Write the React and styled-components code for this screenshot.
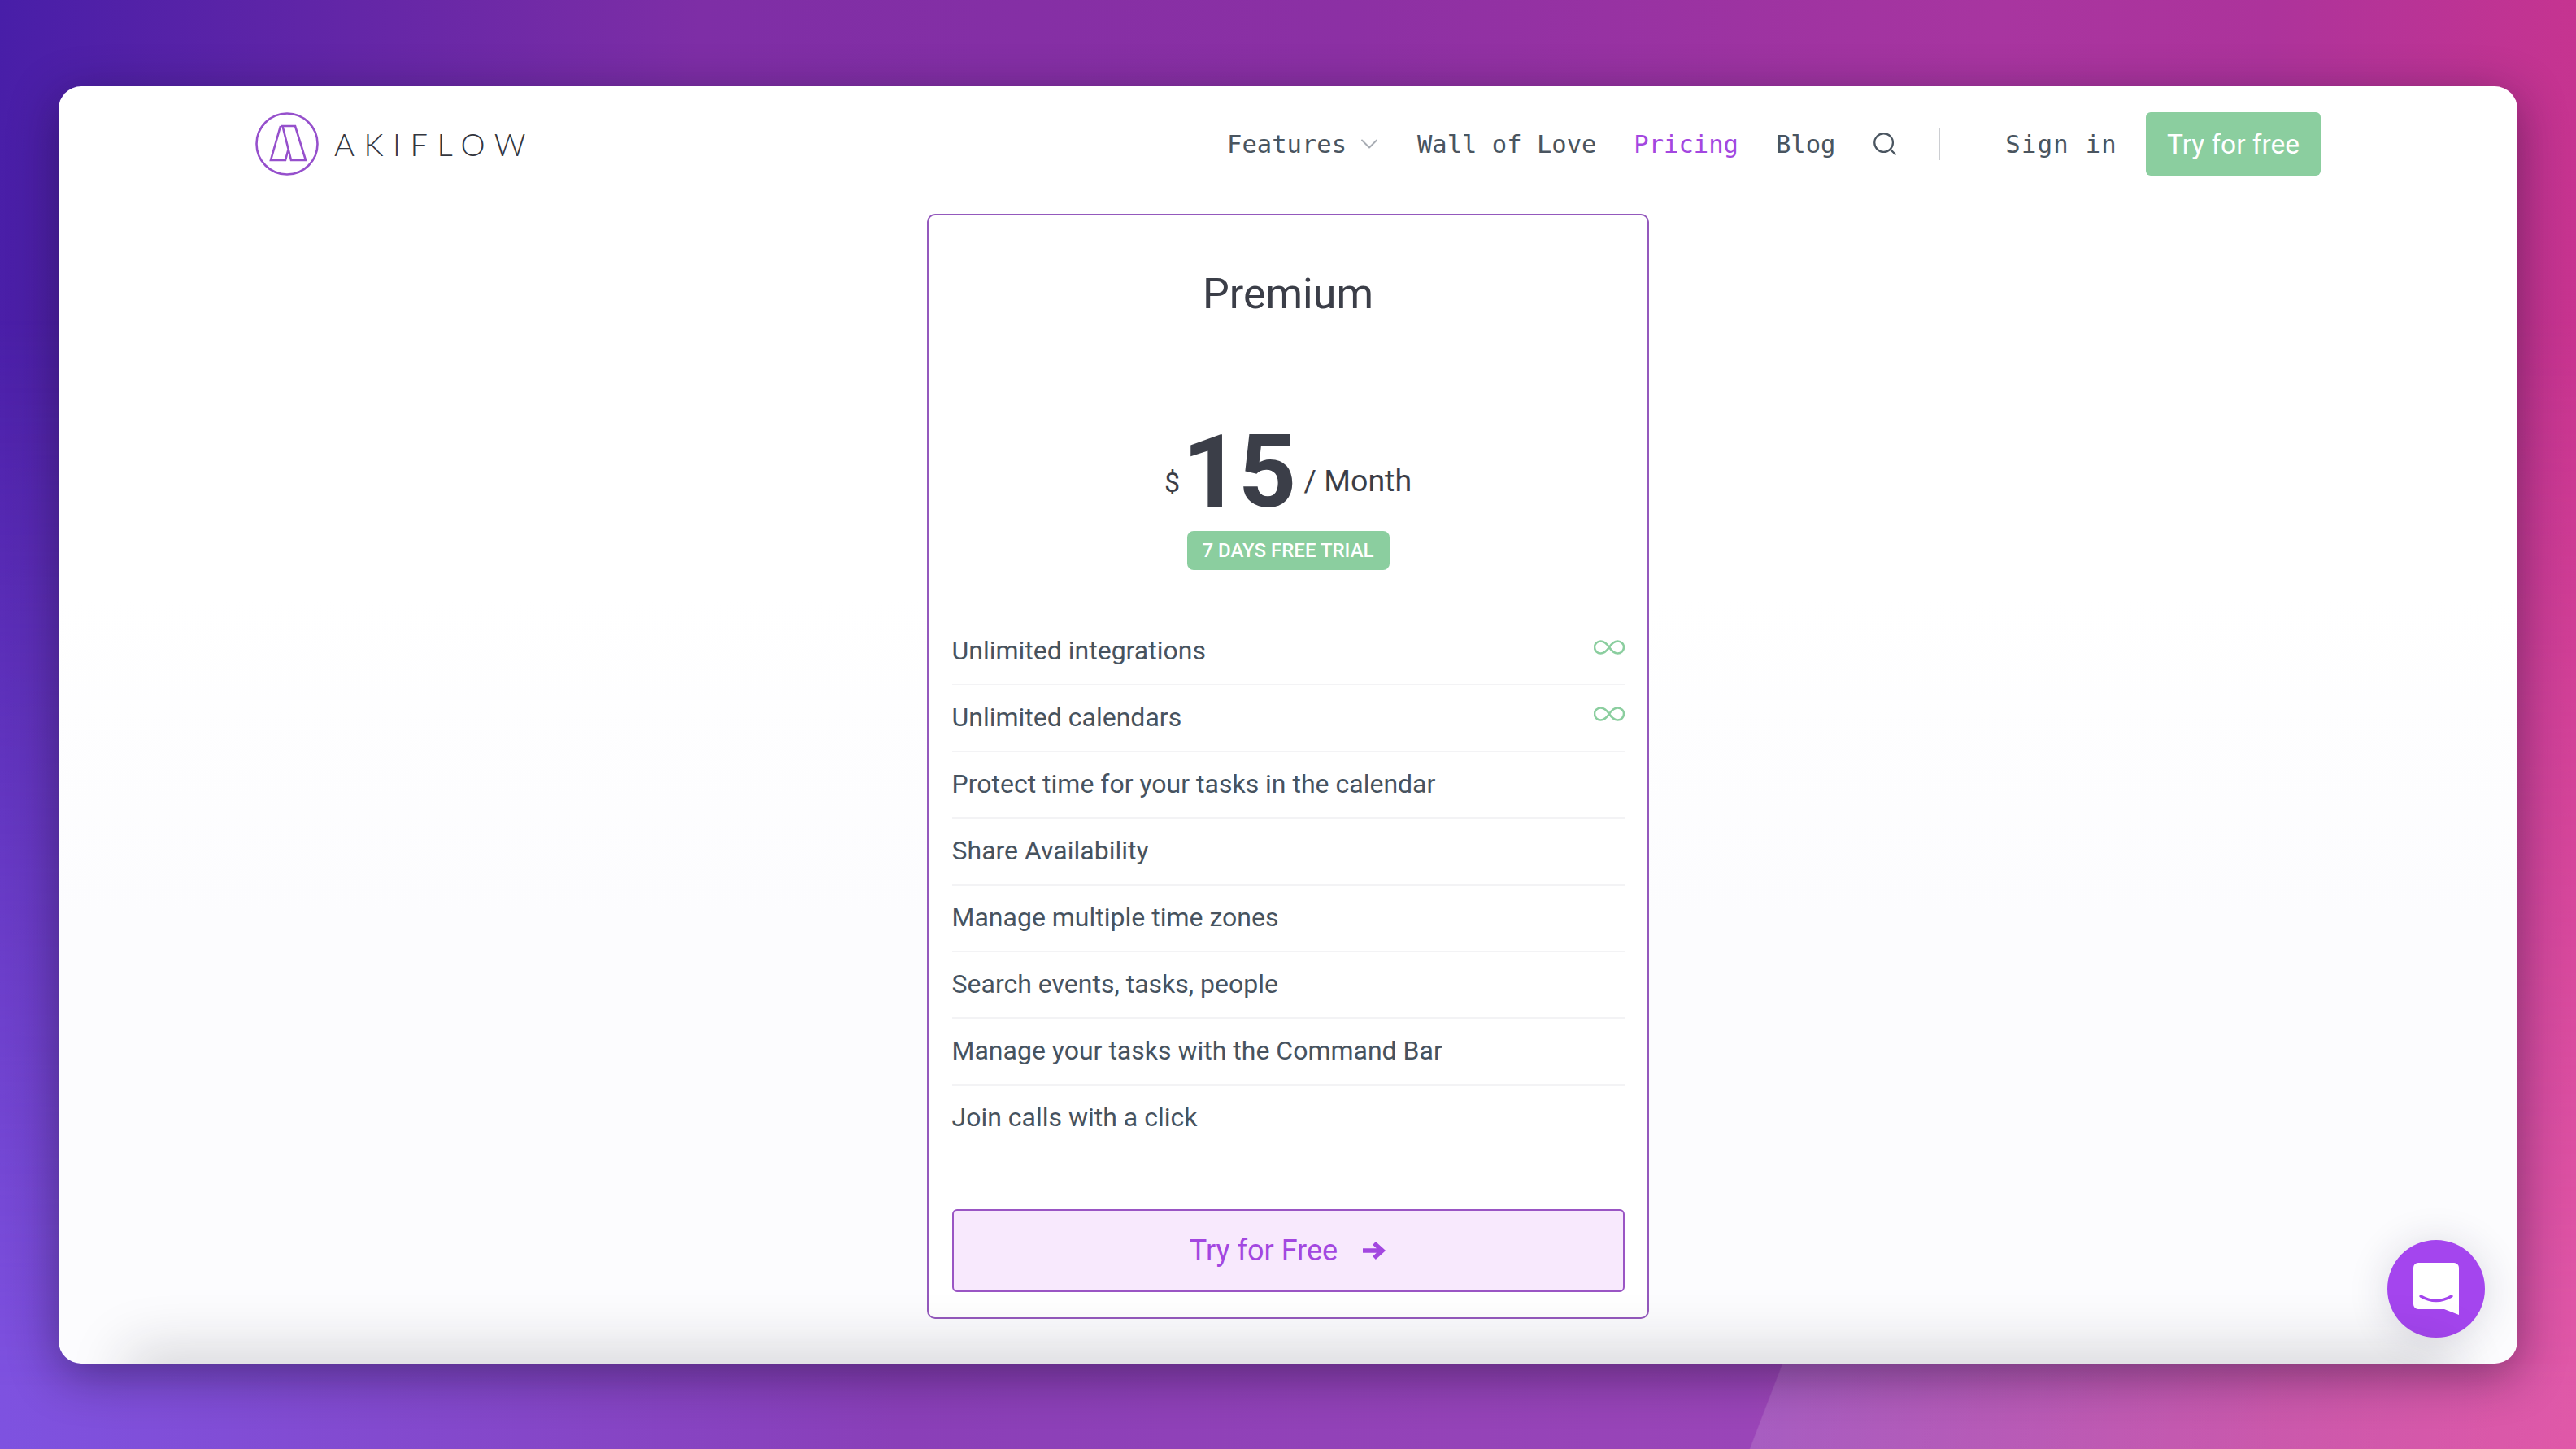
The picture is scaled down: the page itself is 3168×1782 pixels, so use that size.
import React from "react";
import styled, { createGlobalStyle } from "styled-components";
import { Search, ChevronDown } from "lucide-react";

const GlobalStyle = createGlobalStyle`
  html, body {
    margin: 0;
    padding: 0;
    width: 3168px;
    height: 1782px;
    overflow: hidden;
  }
  * {
    box-sizing: border-box;
  }
`;

const Backdrop = styled.div`
  position: relative;
  width: 3168px;
  height: 1782px;
  padding: 106px 72px 105px;
  font-family: Roboto, sans-serif;
  background: linear-gradient(95deg, #481ea8 0%, #7e2ea6 26%, #8c30a4 50%, #a835a0 74%, #ad339b 84%, #d0348c 100%);

  &::before {
    content: "";
    position: absolute;
    inset: 0;
    background:
      linear-gradient(111deg, transparent 68.3%, rgba(255, 255, 255, 0.13) 68.35%, rgba(255, 255, 255, 0) 100%) 0 1678px / 100% 104px no-repeat,
      linear-gradient(90deg, #7e52e0 0%, #8a3fb8 35%, #9a45b8 68%, #c850a8 88%, #e058a8 100%);
    mask-image: linear-gradient(180deg, transparent 22%, #000 96%);
  }
`;

const Window = styled.main`
  position: relative;
  width: 3024px;
  height: 1571px;
  border-radius: 28px;
  background: linear-gradient(180deg, #ffffff 0%, #ffffff 40%, #fcfcfe 65%, #fcfcfe 100%);
  box-shadow: 0 14px 60px rgba(20, 10, 40, 0.45);
  overflow: hidden;

  &::after {
    content: "";
    position: absolute;
    left: 100px;
    right: 100px;
    bottom: -40px;
    height: 40px;
    box-shadow: 0 0 70px 16px rgba(30, 30, 40, 0.18);
  }
`;

const Nav = styled.header`
  display: flex;
  align-items: center;
  justify-content: space-between;
  height: 78px;
  margin: 32px 242px 0;
`;

const Logo = styled.div`
  display: flex;
  align-items: center;
  gap: 19px;
`;

const LogoWord = styled.span`
  font-family: Lato, sans-serif;
  font-weight: 300;
  font-size: 38px;
  letter-spacing: 11.5px;
  color: #33363e;
`;

const Links = styled.nav`
  display: flex;
  align-items: center;
`;

const NavLink = styled.a`
  display: flex;
  align-items: center;
  margin-right: ${(p) => p.$gap || 46}px;
  font-family: "DejaVu Sans Mono", monospace;
  font-size: 30.5px;
  letter-spacing: ${(p) => p.$spacing || 0}px;
  color: ${(p) => (p.$active ? "#a347e0" : "#4a5560")};
`;

const Caret = styled(ChevronDown)`
  margin-left: 10px;
  color: #a7acb3;
`;

const SearchIcon = styled(Search)`
  color: #4a5560;
  margin-right: 49px;
`;

const Divider = styled.span`
  width: 2px;
  height: 40px;
  margin-right: 80px;
  background: #ccced2;
`;

const CtaButton = styled.a`
  display: flex;
  align-items: center;
  justify-content: center;
  width: 215px;
  height: 78px;
  border-radius: 6px;
  background: #8bce9f;
  color: #ffffff;
  font-size: 33.5px;
`;

const Card = styled.section`
  width: 888px;
  height: 1359px;
  margin: 47px auto 0;
  padding: 0 28.5px;
  border: 2.5px solid #9459bd;
  border-radius: 10px;
  background: #ffffff;
`;

const PlanName = styled.h2`
  margin: 0;
  padding-top: 61.5px;
  height: 152.5px;
  font-size: 52px;
  font-weight: 400;
  line-height: 70px;
  text-align: center;
  color: #3b3e48;
`;

const PriceRow = styled.div`
  display: flex;
  align-items: flex-start;
  justify-content: center;
  height: 117px;
  margin-top: 104px;
  color: #3b3e48;
`;

const Currency = styled.span`
  font-size: 34px;
  line-height: 40px;
  margin: 51px 3px 0 0;
`;

const Amount = styled.span`
  font-size: 125px;
  font-weight: 700;
  line-height: 117px;
  letter-spacing: -3px;
  margin-right: 12px;
`;

const Period = styled.span`
  font-size: 37.5px;
  line-height: 44px;
  margin-top: 47px;
`;

const Trial = styled.div`
  width: 249px;
  height: 48px;
  margin: 14px auto 60px;
  border-radius: 8px;
  background: #8bce9f;
  color: #ffffff;
  font-size: 24px;
  font-weight: 500;
  line-height: 48px;
  text-align: center;
`;

const Features = styled.ul`
  margin: 0;
  padding: 0;
  list-style: none;
`;

const Feature = styled.li`
  display: flex;
  justify-content: space-between;
  height: 82px;
  padding-top: 17px;
  font-size: 32px;
  line-height: 44px;
  color: #47535f;
  border-bottom: 2px solid #f3f3f5;

  &:last-child {
    border-bottom: 0;
  }
`;

const Infinity = styled.svg`
  width: 38px;
  height: 18px;
  margin-top: 9px;
  fill: none;
  stroke: #8bce9f;
  stroke-width: 2.6;
`;

const TryButton = styled.a`
  display: flex;
  align-items: center;
  justify-content: center;
  gap: 30px;
  height: 102px;
  margin-top: 70px;
  border: 2.5px solid #9a55c4;
  border-radius: 6px;
  background: #f8e9fd;
  color: #a347e0;
  font-size: 36px;
`;

const ChatBubble = styled.div`
  position: absolute;
  right: 40px;
  bottom: 32px;
  display: flex;
  align-items: center;
  justify-content: center;
  width: 120px;
  height: 120px;
  border-radius: 50%;
  background: #a445ee;
  box-shadow: 0 4px 50px rgba(40, 30, 70, 0.16);
`;

const FEATURES = [
  { label: "Unlimited integrations", unlimited: true },
  { label: "Unlimited calendars", unlimited: true },
  { label: "Protect time for your tasks in the calendar" },
  { label: "Share Availability" },
  { label: "Manage multiple time zones" },
  { label: "Search events, tasks, people" },
  { label: "Manage your tasks with the Command Bar" },
  { label: "Join calls with a click" },
];

const LogoMark = () => (
  <svg width="78" height="78" viewBox="0 0 78 78" fill="none" stroke="#9650cc" strokeWidth="2.6">
    <circle cx="39" cy="39" r="37.5" />
    <path d="M31 17 H49 L62 59 H44 L33.5 17" />
    <path d="M31 17 L19 59 H37 L40.5 46" />
  </svg>
);

const ChatIcon = () => (
  <svg width="56" height="64" viewBox="0 0 56 64">
    <path
      d="M6 0 H50 A6 6 0 0 1 56 6 V64 L38 57 H6 A6 6 0 0 1 0 51 V6 A6 6 0 0 1 6 0 Z"
      fill="#ffffff"
    />
    <path d="M9 41 Q28 52 47 41" fill="none" stroke="#a445ee" strokeWidth="3.4" strokeLinecap="round" />
  </svg>
);

export default function App() {
  return (
    <Backdrop>
      <GlobalStyle />
      <Window>
        <Nav>
          <Logo>
            <LogoMark />
            <LogoWord>AKIFLOW</LogoWord>
          </Logo>
          <Links>
            <NavLink $gap={41}>
              Features
              <Caret size={36} strokeWidth={1.3} />
            </NavLink>
            <NavLink>Wall of Love</NavLink>
            <NavLink $active>Pricing</NavLink>
            <NavLink $gap={44}>Blog</NavLink>
            <SearchIcon size={34} strokeWidth={1.6} />
            <Divider />
            <NavLink $gap={35} $spacing={1.3}>Sign in</NavLink>
            <CtaButton>Try for free</CtaButton>
          </Links>
        </Nav>
        <Card>
          <PlanName>Premium</PlanName>
          <PriceRow>
            <Currency>$</Currency>
            <Amount>15</Amount>
            <Period>/ Month</Period>
          </PriceRow>
          <Trial>7 DAYS FREE TRIAL</Trial>
          <Features>
            {FEATURES.map((f) => (
              <Feature key={f.label}>
                {f.label}
                {f.unlimited && (
                  <Infinity viewBox="0 0 38 18">
                    <path d="M19 9 C15 3 12 1.5 8.5 1.5 A7.5 7.5 0 0 0 8.5 16.5 C12 16.5 15 15 19 9 C23 3 26 1.5 29.5 1.5 A7.5 7.5 0 0 1 29.5 16.5 C26 16.5 23 15 19 9 Z" />
                  </Infinity>
                )}
              </Feature>
            ))}
          </Features>
          <TryButton>
            Try for Free
            <svg width="30" height="24" viewBox="0 0 30 24" fill="none" stroke="#a347e0" strokeWidth="5.5">
              <path d="M1 12 H25 M15 3 L25 12 L15 21" />
            </svg>
          </TryButton>
        </Card>
        <ChatBubble>
          <ChatIcon />
        </ChatBubble>
      </Window>
    </Backdrop>
  );
}
